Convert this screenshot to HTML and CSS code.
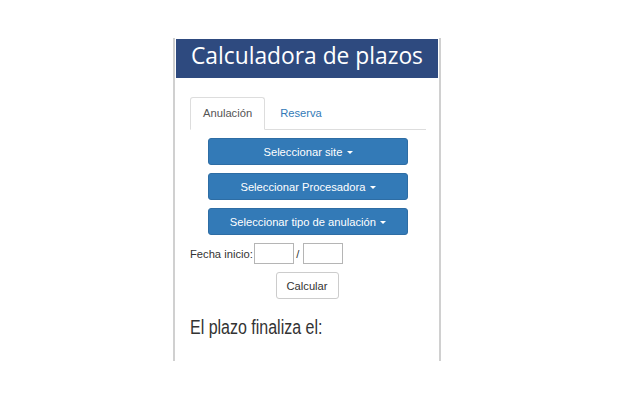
FILE: index.html
```html
<!DOCTYPE html>
<html lang="es">
<head>
<meta charset="utf-8">
<title>Calculadora de plazos</title>
<link rel="stylesheet" href="styles.css">
</head>
<body>
<div class="frame">
  <div class="header">Calculadora de plazos</div>
  <div class="content">
    <ul class="tabs">
      <li class="tab active">Anulación</li>
      <li class="tab link">Reserva</li>
    </ul>
    <div class="actions">
      <button class="btn primary">Seleccionar site <span class="caret"></span></button>
      <button class="btn primary">Seleccionar Procesadora <span class="caret"></span></button>
      <button class="btn primary">Seleccionar tipo de anulación <span class="caret"></span></button>
    </div>
    <div class="date-row">
      <span class="label">Fecha inicio:</span><input class="field" type="text"><span class="slash">/</span><input class="field" type="text">
    </div>
    <div class="calc-row">
      <button class="btn default">Calcular</button>
    </div>
    <h3 class="result"><span class="result-text">El plazo finaliza el:</span></h3>
  </div>
</div>
</body>
</html>
```
FILE: styles.css
```css
html, body {
  margin: 0;
  padding: 0;
  background: #fff;
}
body {
  font-family: "Liberation Sans", Arial, sans-serif;
  color: #333;
  font-size: 11px;
}
.frame {
  margin: 38px 0 0 173px;
  width: 264px;
  height: 322px;
  border-left: 2px solid #d0d0d0;
  border-right: 2px solid #d0d0d0;
  padding-top: 1px;
  box-sizing: content-box;
}
.header {
  margin: 0 1px;
  height: 39px;
  background: #2e4a7f;
  color: #fff;
  font-family: "Open Sans", sans-serif;
  font-size: 22.8px;
  line-height: 33px;
  text-align: center;
}
.content {
  padding: 19px 13px 0 15px;
}
.tabs {
  list-style: none;
  margin: 0;
  padding: 0;
  display: flex;
  border-bottom: 1px solid #ddd;
  height: 32px;
}
.tab {
  padding: 0 12px 0 12px;
  line-height: 31px;
  font-size: 11.2px;
  margin-right: 2px;
  border: 1px solid transparent;
  border-radius: 3px 3px 0 0;
}
.tab.active {
  border-color: #ddd;
  border-bottom-color: #fff;
  background: #fff;
  color: #555;
  box-sizing: border-box;
  margin-bottom: -1px;
  height: 33px;
}
.tab.link {
  color: #337ab7;
}
.actions {
  display: flex;
  flex-direction: column;
  align-items: center;
  gap: 8px;
  margin-top: 8px;
}
.btn {
  font-family: "Liberation Sans", Arial, sans-serif;
  font-size: 11.2px;
  height: 27px;
  border-radius: 3px;
  padding: 0 10px;
  cursor: pointer;
}
.btn.primary {
  width: 200px;
  background: #337ab7;
  border: 1px solid #2e6da4;
  color: #fff;
}
.btn.default {
  width: 63px;
  background: #fff;
  border: 1px solid #ccc;
  color: #333;
  margin-left: -2px;
}
.caret {
  display: inline-block;
  width: 0;
  height: 0;
  margin-left: 1px;
  vertical-align: middle;
  border-top: 3px solid #fff;
  border-left: 3px solid transparent;
  border-right: 3px solid transparent;
}
.date-row {
  display: flex;
  align-items: center;
  margin-top: 8px;
  height: 21px;
}
.label {
  font-size: 11.2px;
}
.field {
  width: 40px;
  height: 21px;
  box-sizing: border-box;
  border: 1px solid #b5b5b5;
  padding: 0;
  margin: 0 0 0 1px;
}
.slash {
  width: 8px;
  text-align: center;
  font-size: 11.2px;
}
.calc-row {
  display: flex;
  justify-content: center;
  margin-top: 8px;
}
.result {
  margin: 17px 0 0;
  font-size: 19.5px;
  font-weight: normal;
  line-height: 22px;
}
.result-text {
  display: inline-block;
  transform: scaleX(0.82);
  transform-origin: left center;
  white-space: nowrap;
}
```
